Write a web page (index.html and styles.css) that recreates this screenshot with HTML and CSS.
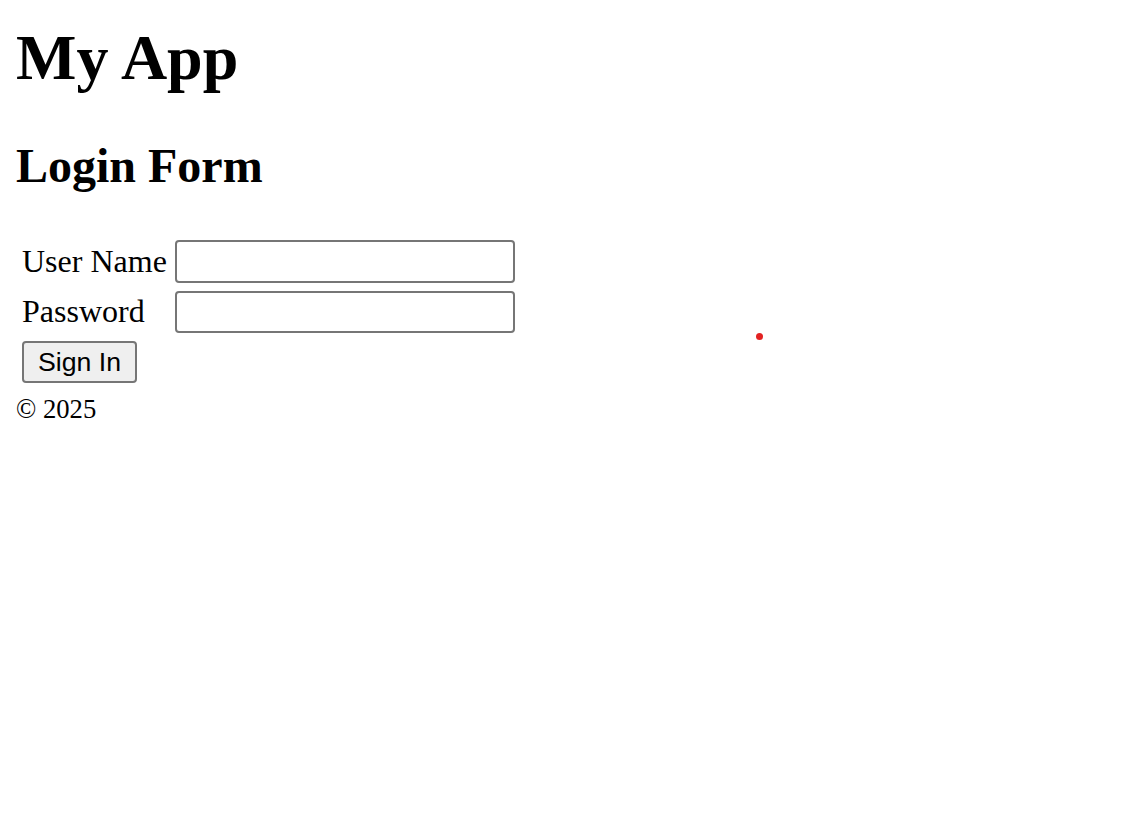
FILE: index.html
```html
<!DOCTYPE html>
<html lang="en">

<head>
  <meta charset="UTF-8">
  <meta name="viewport" content="width=device-width, initial-scale=1.0">
  <title>My App</title>
  <link rel="stylesheet" href="styles.css">
</head>

<body>
  <h1 class="appTitle">My App</h1>
  <h2 class="formTitle">Login Form</h2>

  <form class="loginForm">
    <table class="formTable">
      <tr>
        <td><label for="username">User Name</label></td>
        <td><input type="text" id="username" class="field"></td>
      </tr>
      <tr>
        <td><label for="password">Password</label></td>
        <td><input type="password" id="password" class="field"></td>
      </tr>
      <tr>
        <td><button type="submit" class="signIn">Sign In</button></td>
      </tr>
    </table>
  </form>

  <div class="footer"><small>&copy; 2025</small></div>

  <div class="dot"></div>
</body>

</html>
```

FILE: styles.css
```css
body {
  margin: 0;
  padding: 0 16px;
  font-family: "Liberation Serif", "Times New Roman", serif;
  font-size: 32px;
  color: #000;
  background: #fff;
}

.appTitle {
  font-size: 64px;
  font-weight: bold;
  margin: 21px 0 43px;
}

.formTitle {
  font-size: 48px;
  font-weight: bold;
  margin: 0 0 41px;
}

.loginForm {
  margin: 0;
}

.formTable {
  border-spacing: 4px;
}

.formTable td {
  padding: 2px;
  vertical-align: middle;
}

.field {
  box-sizing: border-box;
  width: 340px;
  height: 42.67px;
  border: 2px solid #767676;
  border-radius: 4px;
  background: #fff;
  font-family: "Liberation Sans", Arial, sans-serif;
  font-size: 26px;
  padding: 2px 4px;
  display: block;
}

.signIn {
  box-sizing: border-box;
  height: 42px;
  padding: 0 14px;
  border: 2px solid #767676;
  border-radius: 4px;
  background: #efefef;
  font-family: "Liberation Sans", Arial, sans-serif;
  font-size: 26.67px;
  color: #000;
}

.footer {
  margin: 0;
}

.footer small {
  font-size: 26.67px;
}

/* 红色标记点 */
.dot {
  position: absolute;
  left: 756px;
  top: 333px;
  width: 7px;
  height: 7px;
  border-radius: 50%;
  background: #e32222;
}
```
